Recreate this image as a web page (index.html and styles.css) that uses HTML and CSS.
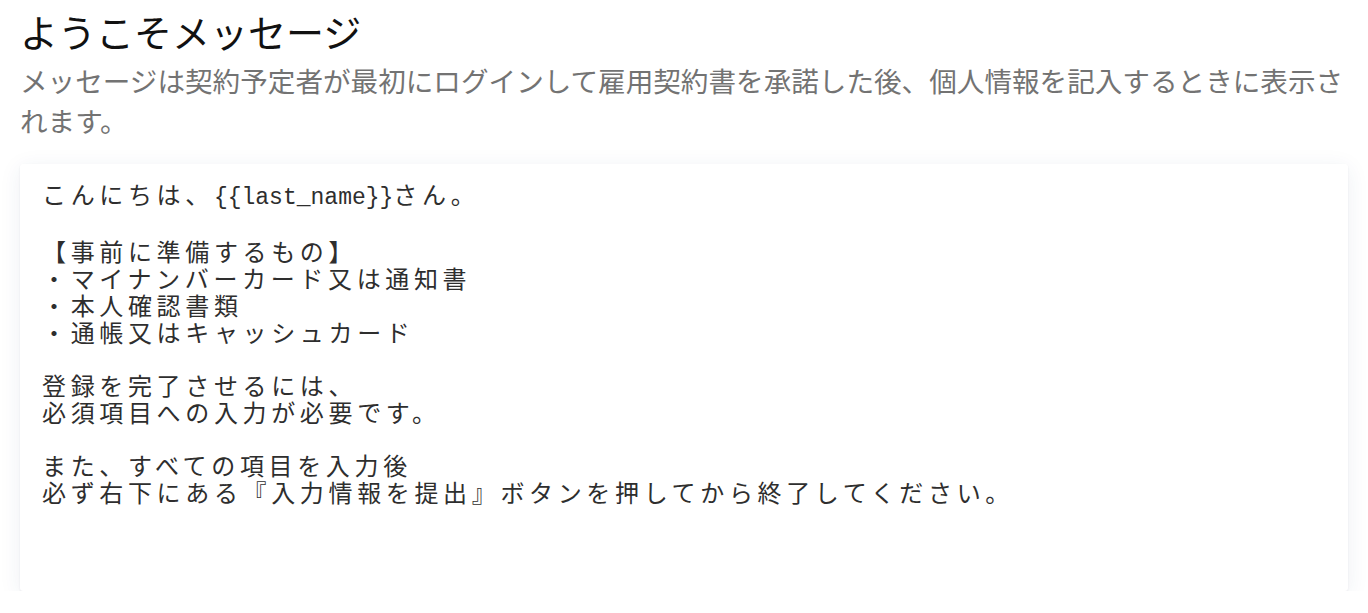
FILE: index.html
```html
<!DOCTYPE html>
<html lang="ja">
<head>
  <meta charset="UTF-8">
  <meta name="viewport" content="width=device-width, initial-scale=1.0">
  <title>ようこそメッセージ</title>
  <link rel="stylesheet" href="styles.css">
</head>
<body>

  <div class="welcome-section">
    <h1 class="section-title">ようこそメッセージ</h1>
    <p class="section-note">メッセージは契約予定者が最初にログインして雇用契約書を承諾した後、個人情報を記入するときに表示されます。</p>

    <!-- preview of the message text -->
    <div class="message-box">
      <p>こんにちは、<span class="token">{{last_name}}</span>さん。</p>
      <p>【事前に準備するもの】<br>・マイナンバーカード又は通知書<br>・本人確認書類<br>・通帳又はキャッシュカード</p>
      <p>登録を完了させるには、<br>必須項目への入力が必要です。</p>
      <p>また、すべての項目を入力後<br>必ず右下にある『入力情報を提出』ボタンを押してから終了してください。</p>
    </div>
  </div>

</body>
</html>
```

FILE: styles.css
```css
body {
  margin: 0;
  background-color: #ffffff;
  font-family: "Noto Sans CJK JP", "Noto Sans", sans-serif;
  overflow: hidden;
}

.welcome-section {
  padding: 0 20px;
}

.section-title {
  margin: 8px 0 0;
  font-size: 38px;
  font-weight: 400;
  line-height: 46px;
  color: #111111;
}

.section-note {
  margin: 6px 0 0;
  font-size: 27.6px;
  line-height: 40px;
  color: #737373;
}

.message-box {
  margin-top: 24px;
  height: 427px;
  box-sizing: border-box;
  padding: 17px 22px;
  background-color: #ffffff;
  border-radius: 3px;
  box-shadow: 0 1px 2px rgba(20, 30, 60, 0.08), 0 4px 22px rgba(40, 60, 120, 0.08);
  font-size: 24px;
  line-height: 26.7px;
  letter-spacing: 4.65px;
  color: #2e2e2e;
}

.message-box p {
  margin: 0 0 26.7px;
}

/* template variable, half width */
.token {
  font-family: "Liberation Mono", "DejaVu Sans Mono", monospace;
  font-size: 23px;
  letter-spacing: 0;
}
```
